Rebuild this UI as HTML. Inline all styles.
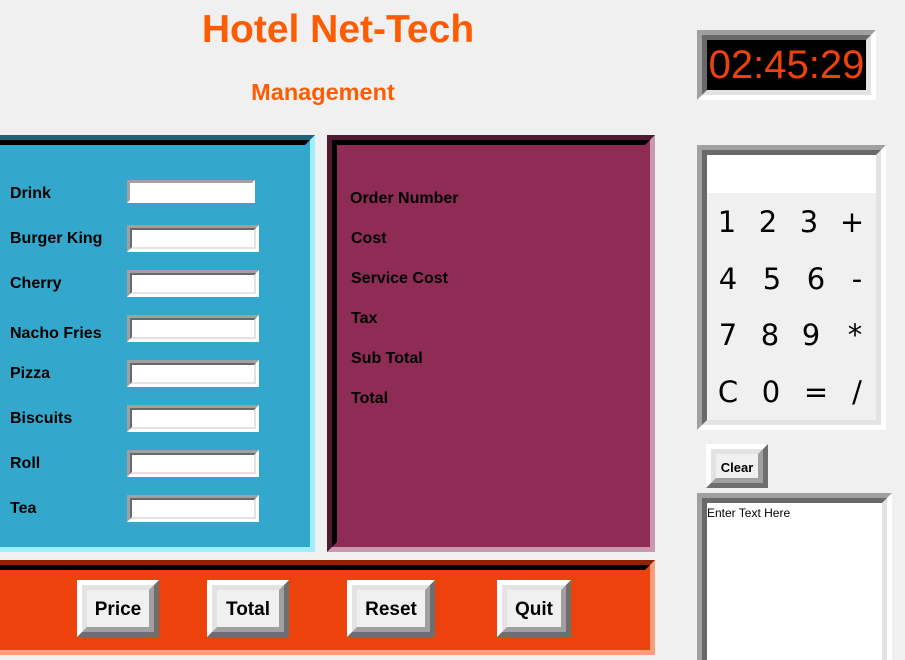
<!DOCTYPE html>
<html><head><meta charset="utf-8"><style>
html,body{margin:0;width:905px;height:660px;overflow:hidden}
body{background:#f0f0f0;position:relative;font-family:"Liberation Sans",Arial,sans-serif}
.a{position:absolute;box-sizing:border-box}
.sunk{border:5px solid;border-color:#a0a0a0 #fff #fff #a0a0a0}
.si{position:absolute;inset:0;border:5px solid;border-color:#696969 #e3e3e3 #e3e3e3 #696969}
.rais{border:5px solid;border-color:#fff #6e6e6e #6e6e6e #fff;background:#f0f0f0}
.rais>div{position:absolute;inset:0;border:5px solid;border-color:#e3e3e3 #a0a0a0 #a0a0a0 #e3e3e3;display:flex;align-items:center;justify-content:center;font-weight:bold;font-size:19px;color:#000;padding-top:2px;box-sizing:border-box}
.inp{border:3px solid;border-color:#a0a0a0 #fff #fff #a0a0a0;background:#fff}
.inp>div{position:absolute;inset:0;border:2px solid;border-color:#696969 #e3e3e3 #e3e3e3 #696969}
.lbl{position:absolute;font-weight:bold;font-size:16px;color:#000;line-height:20px}
.k{position:absolute;font-family:"DejaVu Sans",sans-serif;font-size:29px;width:40px;text-align:center;line-height:34px}
</style></head><body>
<div class="a" style="left:0;top:8px;width:676px;text-align:center;font-size:39px;font-weight:bold;color:#fe5c03;line-height:44px">Hotel Net-Tech</div>
<div class="a" style="left:0;top:78px;width:646px;text-align:center;font-size:23.5px;font-weight:bold;color:#fe5c03;line-height:28px">Management</div>

<div class="a" style="left:-10px;top:135px;width:325px;height:417px;border:5px solid;border-color:#236379 #9ff0ff #9ff0ff #236379;background:#33a8cc">
 <div class="a" style="inset:0;border:5px solid;border-color:#000 #33a8cc #33a8cc #000"></div>
</div>
<div class="lbl" style="left:10px;top:184px">Drink</div>
<div class="lbl" style="left:10px;top:229px">Burger King</div>
<div class="lbl" style="left:10px;top:274px">Cherry</div>
<div class="lbl" style="left:10px;top:324px">Nacho Fries</div>
<div class="lbl" style="left:10px;top:364px">Pizza</div>
<div class="lbl" style="left:10px;top:409px">Biscuits</div>
<div class="lbl" style="left:10px;top:454px">Roll</div>
<div class="lbl" style="left:10px;top:499px">Tea</div>
<div class="a inp" style="left:127px;top:180px;width:128px;height:23px"></div>
<div class="a inp" style="left:127px;top:225px;width:132px;height:27px"><div></div></div>
<div class="a inp" style="left:127px;top:270px;width:132px;height:27px"><div></div></div>
<div class="a inp" style="left:127px;top:315px;width:132px;height:27px"><div></div></div>
<div class="a inp" style="left:127px;top:360px;width:132px;height:27px"><div></div></div>
<div class="a inp" style="left:127px;top:405px;width:132px;height:27px"><div></div></div>
<div class="a inp" style="left:127px;top:450px;width:132px;height:27px"><div></div></div>
<div class="a inp" style="left:127px;top:495px;width:132px;height:27px"><div></div></div>

<div class="a" style="left:327px;top:135px;width:328px;height:417px;border:5px solid;border-color:#4e1a30 #cc98b0 #cc98b0 #4e1a30;background:#8e2c55">
 <div class="a" style="inset:0;border:5px solid;border-color:#000 #8e2c55 #8e2c55 #000"></div>
</div>
<div class="lbl" style="left:350px;top:189px">Order Number</div>
<div class="lbl" style="left:351px;top:229px">Cost</div>
<div class="lbl" style="left:351px;top:269px">Service Cost</div>
<div class="lbl" style="left:351px;top:309px">Tax</div>
<div class="lbl" style="left:351px;top:349px">Sub Total</div>
<div class="lbl" style="left:351px;top:389px">Total</div>

<div class="a" style="left:-10px;top:560px;width:665px;height:95px;border:5px solid;border-color:#8b2500 #ff9d7a #ff9d7a #8b2500;background:#ee420c">
 <div class="a" style="inset:0;border:5px solid;border-color:#000 #ee420c #ee420c #000"></div>
</div>
<div class="a rais" style="left:77px;top:580px;width:82px;height:57px"><div>Price</div></div>
<div class="a rais" style="left:207px;top:580px;width:82px;height:57px"><div>Total</div></div>
<div class="a rais" style="left:347px;top:580px;width:88px;height:57px"><div>Reset</div></div>
<div class="a rais" style="left:497px;top:580px;width:74px;height:57px"><div>Quit</div></div>

<div class="a sunk" style="left:697px;top:30px;width:179px;height:70px;background:#000"><div class="si"></div>
 <div class="a" style="left:5px;top:5px;width:159px;height:50px;color:#ee420c;font-size:40px;line-height:50px;text-align:center">02:45:29</div>
</div>

<div class="a sunk" style="left:697px;top:145px;width:189px;height:285px;background:#f0f0f0"><div class="si"></div>
 <div class="a" style="left:5px;top:5px;width:169px;height:38px;background:#fff"></div>
</div>
<div class="k" style="left:707px;top:205px">1</div><div class="k" style="left:748px;top:205px">2</div><div class="k" style="left:789px;top:205px">3</div><div class="k" style="left:832px;top:205px">+</div>
<div class="k" style="left:708px;top:262px">4</div><div class="k" style="left:752px;top:262px">5</div><div class="k" style="left:796px;top:262px">6</div><div class="k" style="left:837px;top:262px">-</div>
<div class="k" style="left:708px;top:318px">7</div><div class="k" style="left:750px;top:318px">8</div><div class="k" style="left:791px;top:318px">9</div><div class="k" style="left:835px;top:318px">*</div>
<div class="k" style="left:708px;top:375px">C</div><div class="k" style="left:751px;top:375px">0</div><div class="k" style="left:796px;top:375px">=</div><div class="k" style="left:837px;top:375px">/</div>

<div class="a rais" style="left:706px;top:444px;width:62px;height:44px"><div style="font-size:13px">Clear</div></div>

<div class="a sunk" style="left:697px;top:493px;width:195px;height:180px;background:#fff"><div class="si"></div>
 <div class="a" style="left:5px;top:8px;font-size:12px;color:#000">Enter Text Here</div>
</div>
</body></html>
